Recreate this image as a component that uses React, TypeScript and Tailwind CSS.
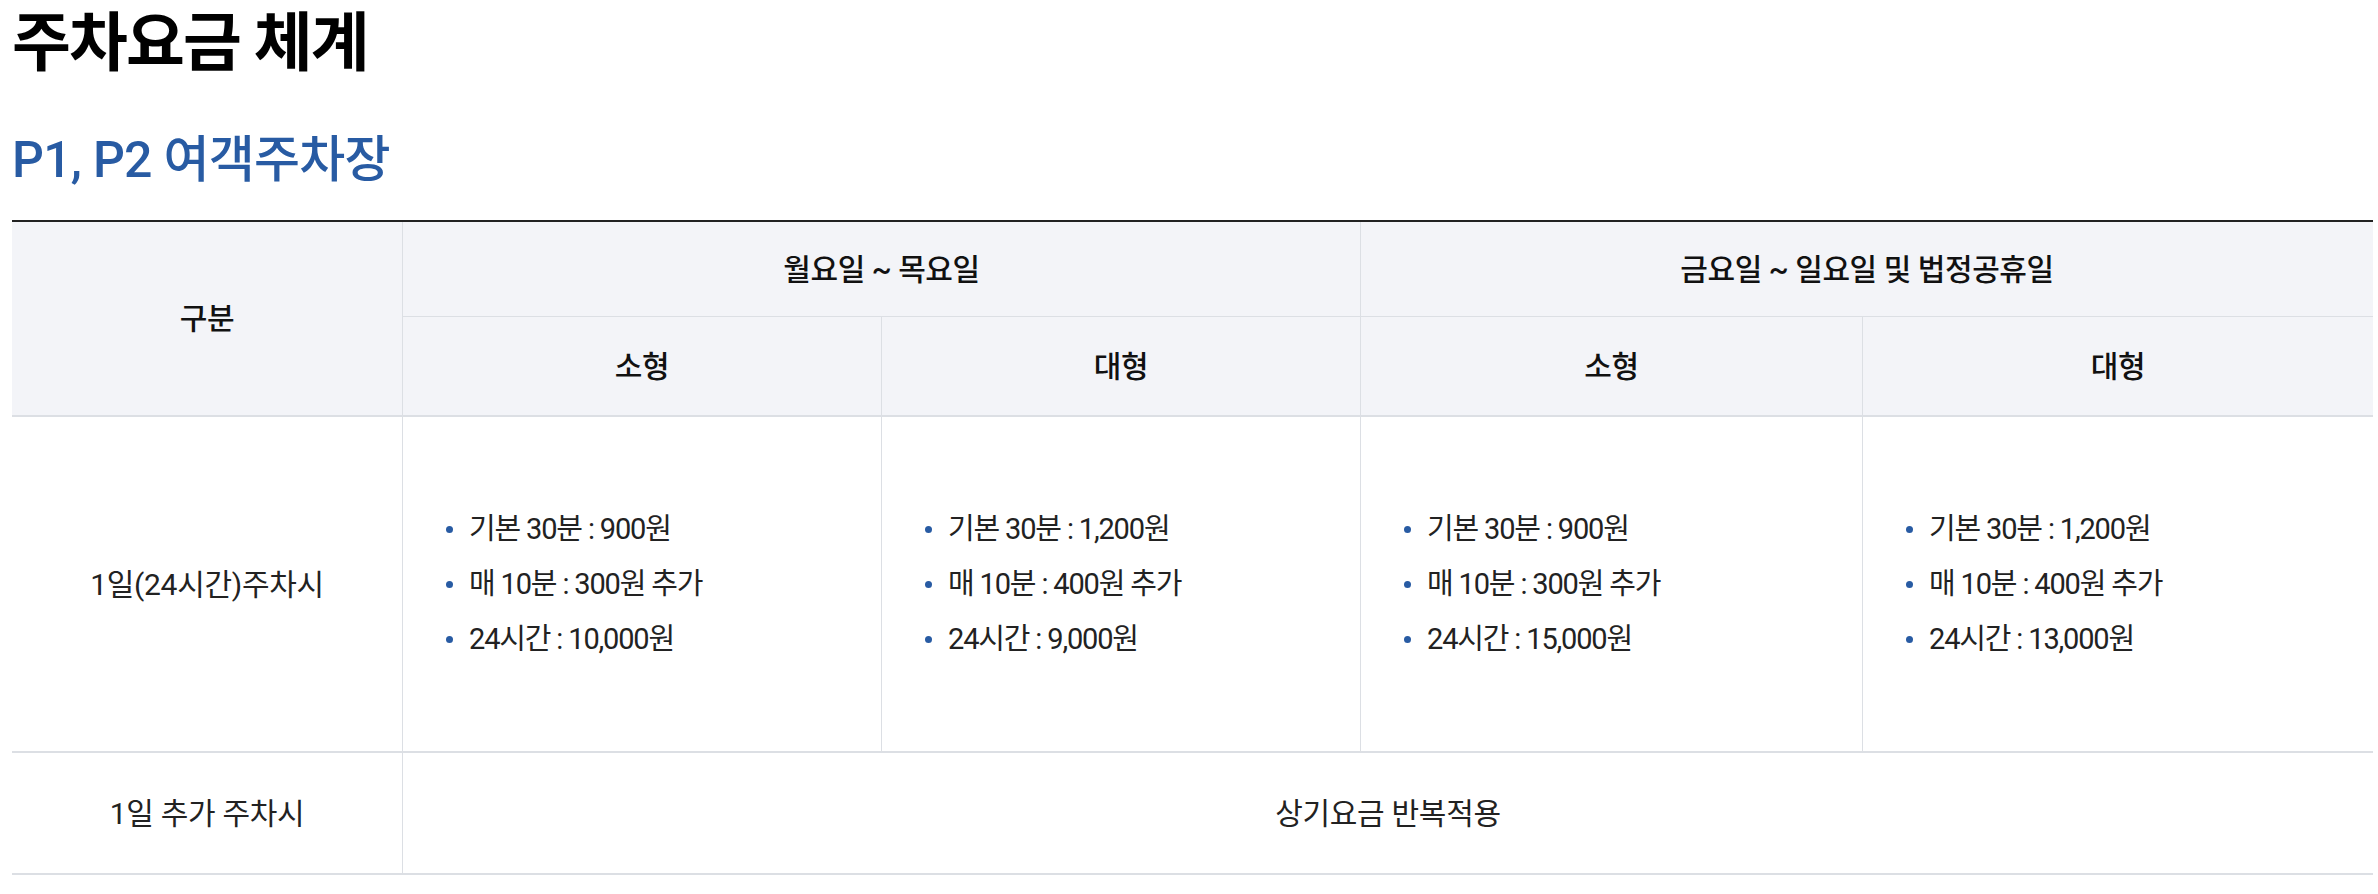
import React from "react";

type Fee = { base: string; per10: string; day: string };

const fees: Fee[] = [
  { base: "900원", per10: "300원", day: "10,000원" },
  { base: "1,200원", per10: "400원", day: "9,000원" },
  { base: "900원", per10: "300원", day: "15,000원" },
  { base: "1,200원", per10: "400원", day: "13,000원" },
];

function FeeList({ fee }: { fee: Fee }) {
  const items = [
    `기본 30분 : ${fee.base}`,
    `매 10분 : ${fee.per10} 추가`,
    `24시간 : ${fee.day}`,
  ];
  return (
    <ul className="flex flex-col gap-[19px]">
      {items.map((t) => (
        <li key={t} className="flex items-center gap-[16px] leading-[36px]">
          <span className="w-[7px] h-[7px] rounded-full bg-[#285ba3] shrink-0" />
          <span>{t}</span>
        </li>
      ))}
    </ul>
  );
}

export default function App() {
  const head = "bg-[#f3f4f8] flex items-center justify-center text-[30px] font-medium text-[#111] tracking-[-0.015em]";
  const body = "flex items-center justify-center text-[30px] text-[#222] tracking-[-0.01em]";

  return (
    <div
      className="w-[2378px] bg-white pl-[12px] pr-[5px] pt-[2px]"
      style={{ fontFamily: 'Roboto, "Noto Sans CJK KR", sans-serif' }}
    >
      <h1 className="text-[64px] font-bold text-black leading-[84px] tracking-[-0.03em]">
        주차요금 체계
      </h1>
      <h2 className="mt-[44px] text-[50px] font-medium text-[#285ba3] leading-[60px] tracking-[-0.015em]">
        P1, P2 여객주차장
      </h2>

      <div className="mt-[30px] border-t-2 border-[#222] grid grid-cols-[390px_479px_479px_502px_511px] grid-rows-[95px_100px_336px_122px]">
        {/* header */}
        <div className={`${head} row-span-2 border-b-2 border-[#dcdfe4]`}>구분</div>
        <div className={`${head} col-span-2 border-l border-b border-[#dcdfe4]`}>월요일 ~ 목요일</div>
        <div className={`${head} col-span-2 border-l border-b border-[#dcdfe4]`}>금요일 ~ 일요일 및 법정공휴일</div>
        <div className={`${head} border-l border-b-2 border-[#dcdfe4]`}>소형</div>
        <div className={`${head} border-l border-b-2 border-[#dcdfe4]`}>대형</div>
        <div className={`${head} border-l border-b-2 border-[#dcdfe4]`}>소형</div>
        <div className={`${head} border-l border-b-2 border-[#dcdfe4]`}>대형</div>

        {/* 1일 */}
        <div className={`${body} border-b-2 border-[#dcdfe4]`}>1일(24시간)주차시</div>
        {fees.map((f, i) => (
          <div
            key={i}
            className="flex items-center pl-[43px] text-[29px] text-[#222] tracking-[-0.04em] border-l border-b-2 border-[#dcdfe4]"
          >
            <FeeList fee={f} />
          </div>
        ))}

        {/* 추가 */}
        <div className={`${body} border-b-2 border-[#dcdfe4]`}>1일 추가 주차시</div>
        <div className={`${body} col-span-4 border-l border-b-2 border-[#dcdfe4]`}>상기요금 반복적용</div>
      </div>
    </div>
  );
}
